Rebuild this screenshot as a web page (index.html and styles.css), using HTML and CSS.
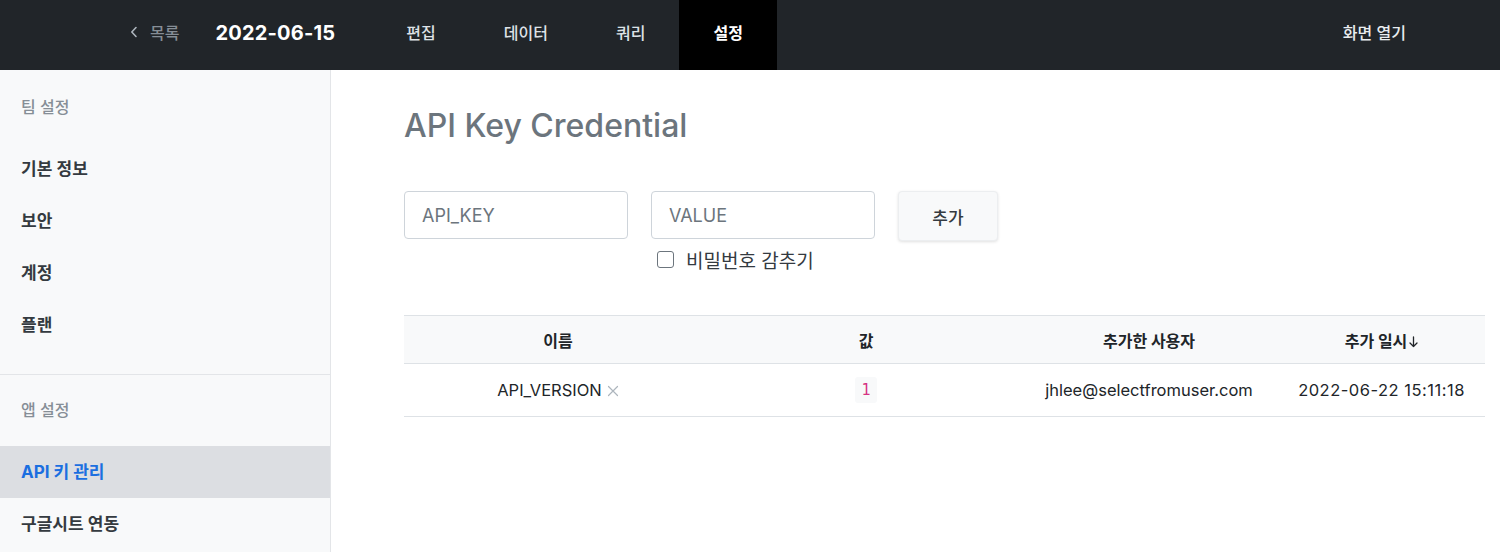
FILE: index.html
```html
<!DOCTYPE html>
<html lang="ko">
<head>
<meta charset="utf-8">
<title>API Key Credential</title>
<link rel="stylesheet" href="styles.css">
</head>
<body>
<header class="topbar">
  <a class="back">
    <svg class="back-icon" width="8" height="12" viewBox="0 0 8 12"><path d="M6 1.5 L1.8 6 L6 10.5" fill="none" stroke="#adb5bd" stroke-width="1.6" stroke-linecap="round" stroke-linejoin="round"/></svg>
    <span>목록</span>
  </a>
  <div class="brand">2022-06-15</div>
  <nav class="tabs">
    <a class="tab">편집</a>
    <a class="tab">데이터</a>
    <a class="tab">쿼리</a>
    <a class="tab active">설정</a>
  </nav>
  <div class="spacer"></div>
  <a class="open">화면 열기</a>
</header>
<div class="layout">
  <aside class="sidebar">
    <div class="group">
      <div class="group-label">팀 설정</div>
      <a class="item">기본 정보</a>
      <a class="item">보안</a>
      <a class="item">계정</a>
      <a class="item">플랜</a>
    </div>
    <div class="group second">
      <div class="group-label">앱 설정</div>
      <a class="item active">API 키 관리</a>
      <a class="item">구글시트 연동</a>
    </div>
  </aside>
  <main class="main">
    <h1 class="title">API Key Credential</h1>
    <div class="form-row">
      <input class="field" type="text" placeholder="API_KEY">
      <div class="field-group">
        <input class="field" type="text" placeholder="VALUE">
        <label class="check"><span class="box"></span><span>비밀번호 감추기</span></label>
      </div>
      <button class="add-btn">추가</button>
    </div>
    <table class="keys">
      <colgroup>
        <col class="c1"><col class="c2"><col class="c3"><col class="c4">
      </colgroup>
      <thead>
        <tr>
          <th>이름</th>
          <th>값</th>
          <th>추가한 사용자</th>
          <th>추가 일시<svg class="sort" width="9" height="12" viewBox="0 0 9 12"><path d="M4.5 1 V10.5 M1 7 L4.5 10.5 L8 7" fill="none" stroke="#212529" stroke-width="1.3" stroke-linecap="round" stroke-linejoin="round"/></svg></th>
        </tr>
      </thead>
      <tbody>
        <tr>
          <td>API_VERSION<svg class="remove" width="12" height="12" viewBox="0 0 12 12"><path d="M1.5 1.5 L10.5 10.5 M10.5 1.5 L1.5 10.5" stroke="#adb5bd" stroke-width="1.2" stroke-linecap="round"/></svg></td>
          <td><code class="val">1</code></td>
          <td>jhlee@selectfromuser.com</td>
          <td class="date">2022-06-22 15:11:18</td>
        </tr>
      </tbody>
    </table>
  </main>
</div>
</body>
</html>
```

FILE: styles.css
```css
* { box-sizing: border-box; }
html, body { margin: 0; padding: 0; }
body {
  font-family: Inter, "Noto Sans CJK KR", sans-serif;
  color: #212529;
  background: #fff;
  width: 1500px;
  height: 552px;
  overflow: hidden;
}
a { text-decoration: none; color: inherit; }

.topbar {
  display: flex;
  align-items: stretch;
  height: 70px;
  background: #212529;
  padding-left: 130px;
  padding-right: 61px;
}
.back {
  display: flex;
  align-items: center;
  gap: 12px;
  padding-bottom: 6px;
  color: #868e96;
  font-size: 16px;
  font-weight: 500;
}
.back-icon { display: block; }
.brand {
  display: flex;
  align-items: center;
  margin-left: 36px;
  padding-bottom: 5px;
  color: #fff;
  font-size: 20px;
  font-weight: 700;
  letter-spacing: 0.2px;
}
.tabs {
  display: flex;
  margin-left: 37px;
}
.tab {
  display: flex;
  align-items: center;
  padding: 0 34px 7px;
  color: #dee2e6;
  font-size: 16px;
  font-weight: 500;
}
.tab.active {
  background: #000;
  color: #fff;
  font-weight: 700;
}
.spacer { flex: 1; }
.open {
  display: flex;
  align-items: center;
  padding: 0 33px 7px;
  color: #e9ecef;
  font-size: 16px;
  font-weight: 500;
}

.layout {
  display: flex;
  height: 482px;
}
.sidebar {
  width: 331px;
  flex: none;
  background: #f8f9fa;
  border-right: 1px solid #e3e5e8;
}
.group {
  padding: 11px 0 23px;
  border-bottom: 1px solid #e3e5e8;
}
.group.second {
  padding-top: 9px;
  border-bottom: none;
}
.group-label {
  height: 52px;
  line-height: 52px;
  padding-left: 21px;
  margin-bottom: 10px;
  color: #868e96;
  font-size: 16px;
  font-weight: 500;
}
.item {
  display: block;
  height: 52px;
  line-height: 52px;
  padding-left: 21px;
  color: #343a40;
  font-size: 17px;
  font-weight: 600;
}
.item.active {
  background: #dcdee2;
  color: #1b6fe0;
  font-weight: 700;
}

.main {
  flex: 1;
  padding: 36px 15px 0 73px;
}
.title {
  margin: 0 0 45px;
  height: 40px;
  line-height: 40px;
  font-size: 32px;
  font-weight: 500;
  color: #6c757d;
}
.form-row {
  display: flex;
  align-items: flex-start;
  gap: 23px;
}
.field-group {
  display: flex;
  flex-direction: column;
}
.field {
  width: 224px;
  height: 48px;
  padding: 0 17px;
  border: 1px solid #ced4da;
  border-radius: 4px;
  font-family: inherit;
  font-size: 18px;
  color: #212529;
  background: #fff;
  outline: none;
}
.field::placeholder { color: #6c757d; font-weight: 400; }
.check {
  display: flex;
  align-items: center;
  gap: 12px;
  margin-top: 7px;
  padding-left: 6px;
  font-size: 19px;
  color: #343a40;
}
.box {
  width: 17px;
  height: 17px;
  border: 1.5px solid #6c757d;
  border-radius: 3px;
  background: #fff;
}
.add-btn {
  width: 100px;
  height: 50px;
  border: 1px solid #eceef0;
  border-radius: 4px;
  background: #f8f9fa;
  box-shadow: 0 1px 3px rgba(0, 0, 0, 0.12);
  font-family: inherit;
  font-size: 17px;
  font-weight: 500;
  color: #343a40;
}

.keys {
  margin-top: 42px;
  width: 1081px;
  border-collapse: collapse;
  table-layout: fixed;
}
.c1 { width: 308px; }
.c2 { width: 308px; }
.c3 { width: 258px; }
.c4 { width: 207px; }
.keys th {
  height: 48px;
  background: #f8f9fa;
  border-top: 1px solid #dee2e6;
  border-bottom: 1px solid #dee2e6;
  font-size: 16px;
  font-weight: 700;
  color: #212529;
  text-align: center;
}
.keys td {
  height: 53px;
  border-bottom: 1px solid #dee2e6;
  font-size: 16.5px;
  color: #212529;
  text-align: center;
}
.keys td.date { letter-spacing: 0.5px; }
.sort {
  margin-left: 2px;
  vertical-align: -1px;
}
.remove {
  margin-left: 5px;
  vertical-align: -1px;
}
.val {
  display: inline-block;
  padding: 4px 6px;
  background: #f8f9fa;
  color: #d63384;
  font-family: "DejaVu Sans Mono", monospace;
  font-size: 15px;
  border-radius: 3px;
}
```
